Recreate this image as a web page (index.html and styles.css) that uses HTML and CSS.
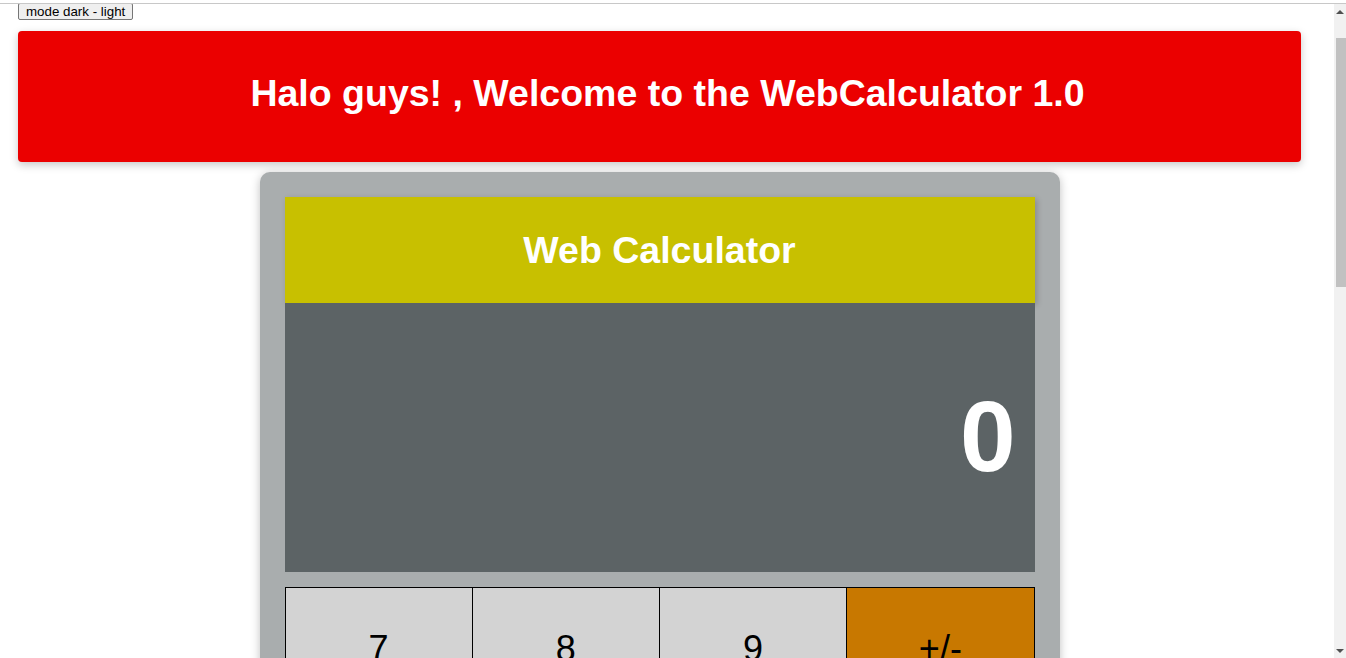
FILE: index.html
```html
<!DOCTYPE html>
<html lang="en">
<head>
<meta charset="utf-8">
<title>WebCalculator 1.0</title>
<link rel="stylesheet" href="styles.css">
</head>
<body>
<div class="frame">
  <div class="page">
    <button class="mode-btn" type="button">mode dark - light</button>
    <div class="main">
      <header class="banner">
        <h1 class="banner-title">Halo guys! , Welcome to the WebCalculator 1.0</h1>
      </header>
      <section class="calc">
        <div class="calc-head">Web Calculator</div>
        <div class="calc-display"><span class="calc-value">0</span></div>
        <div class="keys">
          <button class="key" type="button">7</button>
          <button class="key" type="button">8</button>
          <button class="key" type="button">9</button>
          <button class="key key-op" type="button">+/-</button>
          <button class="key" type="button">4</button>
          <button class="key" type="button">5</button>
          <button class="key" type="button">6</button>
          <button class="key key-op" type="button">*</button>
          <button class="key" type="button">1</button>
          <button class="key" type="button">2</button>
          <button class="key" type="button">3</button>
          <button class="key key-op" type="button">-</button>
          <button class="key" type="button">0</button>
          <button class="key" type="button">.</button>
          <button class="key key-op" type="button">/</button>
          <button class="key key-op" type="button">+</button>
        </div>
      </section>
    </div>
  </div>
  <div class="scrollbar" aria-hidden="true">
    <div class="sb-arrow sb-up"></div>
    <div class="sb-thumb"></div>
    <div class="sb-space"></div>
    <div class="sb-arrow sb-down"></div>
  </div>
</div>
</body>
</html>
```
FILE: styles.css
```css
html, body {
  margin: 0;
  padding: 0;
  height: 100%;
  overflow: hidden;
  background: #ffffff;
}
body {
  border-top: 3px solid #ffffff;
  box-sizing: border-box;
  font-family: "Liberation Sans", Arial, sans-serif;
}
.frame {
  height: calc(100vh - 3px);
  box-sizing: border-box;
  border-top: 1px solid #c8c8c8;
  display: flex;
}
.page {
  flex: 1;
  min-width: 0;
  overflow: hidden;
}
.scrollbar {
  width: 12px;
  background: #f1f1f1;
  display: flex;
  flex-direction: column;
}
.sb-arrow {
  height: 15px;
  display: flex;
  align-items: center;
  justify-content: center;
}
.sb-up::before {
  content: "";
  border-left: 4px solid transparent;
  border-right: 4px solid transparent;
  border-bottom: 4px solid #505050;
}
.sb-down::before {
  content: "";
  border-left: 4px solid transparent;
  border-right: 4px solid transparent;
  border-top: 4px solid #505050;
}
.sb-thumb {
  margin: 19px 0 0 2px;
  height: 249px;
  background: #c1c1c1;
}
.sb-space {
  flex: 1;
}
.mode-btn {
  display: block;
  margin: -1px 0 0 18px;
  height: 17px;
  padding: 0 7px;
  font: 13.33px "Liberation Sans", Arial, sans-serif;
  color: #000;
  background: #efefef;
  border: 1px solid #767676;
  border-radius: 2px;
  line-height: 15px;
}
.main {
  margin: 11px 33px 0 18px;
}
.banner {
  height: 131px;
  box-sizing: border-box;
  background: #eb0000;
  border-radius: 4px;
  box-shadow: 0 3px 8px rgba(0, 0, 0, 0.22);
  display: flex;
  align-items: center;
  justify-content: center;
  padding: 0 0 6px 16px;
}
.banner-title {
  margin: 0;
  color: #ffffff;
  font-size: 37.5px;
  font-weight: bold;
  text-align: center;
}
.calc {
  width: 800px;
  box-sizing: border-box;
  margin: 10px auto 0;
  padding: 25px;
  background: #a9adae;
  border-radius: 10px;
  box-shadow: 0 2px 10px rgba(0, 0, 0, 0.25);
}
.calc-head {
  height: 106px;
  background: #c8c000;
  color: #ffffff;
  font-size: 37.5px;
  font-weight: bold;
  display: flex;
  align-items: center;
  justify-content: center;
  box-shadow: 2px 2px 6px rgba(0, 0, 0, 0.2);
}
.calc-display {
  height: 269px;
  background: #5c6365;
  display: flex;
  align-items: center;
  justify-content: flex-end;
  padding: 0 19px 2px 0;
  box-sizing: border-box;
}
.calc-value {
  color: #ffffff;
  font-size: 100px;
  font-weight: bold;
}
.keys {
  margin-top: 15px;
  display: grid;
  grid-template-columns: repeat(4, 1fr);
  border-top: 1px solid #000;
  border-left: 1px solid #000;
}
.key {
  height: 122px;
  margin: 0;
  padding: 0;
  border: 0;
  border-right: 1px solid #000;
  border-bottom: 1px solid #000;
  background: #d3d3d3;
  color: #000;
  font: 36px "Liberation Sans", Arial, sans-serif;
}
.key-op {
  background: #c87800;
}
```
